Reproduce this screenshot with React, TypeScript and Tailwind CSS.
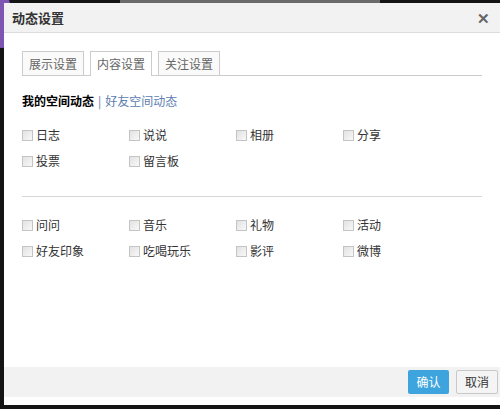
import React from 'react'

const rowsTop = [
    ['日志', '说说', '相册', '分享'],
    ['投票', '留言板'],
]

const rowsBottom = [
    ['问问', '音乐', '礼物', '活动'],
    ['好友印象', '吃喝玩乐', '影评', '微博'],
]

const Check = ({ label }: { label: string }) => (
    <label className="flex items-center gap-[3px] w-[107px] h-[26px] cursor-pointer">
        <span className="w-[11px] h-[11px] border border-[#c4c4c4] bg-gradient-to-br from-[#e2e2e2] to-[#f8f8f8] shrink-0" />
        <span className="text-[12px] text-[#333]">{label}</span>
    </label>
)

const Rows = ({ rows }: { rows: string[][] }) => (
    <div className="flex flex-col">
        {rows.map((row, i) => (
            <div key={i} className="flex">
                {row.map((item) => (
                    <Check key={item} label={item} />
                ))}
            </div>
        ))}
    </div>
)

export default function App() {
    const tabs = ['展示设置', '内容设置', '关注设置']

    return (
        <div
            className="relative w-[500px] h-[409px] bg-[#141414] overflow-hidden pt-[3px] pl-[4px]"
            style={{ fontFamily: '"Noto Sans CJK SC", "Noto Sans", sans-serif' }}
        >
            {/* background bits peeking out */}
            <div className="absolute left-[-6px] top-[-4px] w-[16px] h-[52px] rounded-full bg-[#8a5cc4] opacity-90" />
            <div className="absolute left-[120px] top-0 w-[260px] h-[3px] bg-[#6b6b6b]" />

            <div className="relative flex flex-col w-[496px] h-[402px] bg-white">
                {/* title */}
                <div className="flex items-center justify-between h-[30px] px-[8px] bg-[#f2f2f2] border-b border-[#dcdcdc]">
                    <span className="text-[13px] font-bold text-[#333]">动态设置</span>
                    <span className="text-[15px] font-bold text-[#666] leading-none mr-[2px]">✕</span>
                </div>

                {/* body */}
                <div className="flex-1 px-[18px] pt-[18px]">
                    <div className="flex gap-[6px] border-b border-[#ccc] w-[460px]">
                        {tabs.map((t, i) => (
                            <div
                                key={t}
                                className={`w-[62px] h-[24px] flex items-center justify-center text-[12px] text-[#666] border border-[#ccc] border-b-0 -mb-px ${i === 1 ? 'bg-white h-[25px]' : 'bg-[#fafafa]'}`}
                            >
                                {t}
                            </div>
                        ))}
                    </div>

                    <div className="flex items-center mt-[16px] text-[12px]">
                        <span className="font-bold text-black">我的空间动态</span>
                        <span className="mx-[4px] text-[#5b7db0]">|</span>
                        <span className="text-[#5b7db0]">好友空间动态</span>
                    </div>

                    <div className="mt-[12px]">
                        <Rows rows={rowsTop} />
                    </div>

                    <div className="mt-[22px] mb-[15px] w-[460px] border-t border-[#d6d6d6]" />

                    <Rows rows={rowsBottom} />
                </div>

                {/* footer */}
                <div className="flex items-center justify-end gap-[7px] h-[30px] bg-[#f2f2f2] pr-[2px] mb-[8px]">
                    <button className="w-[41px] h-[24px] bg-[#3ea4de] text-white text-[12px] rounded-[2px]">确认</button>
                    <button className="w-[42px] h-[24px] bg-[#f4f4f4] border border-[#c8c8c8] text-[#333] text-[12px] rounded-[2px]">取消</button>
                </div>
            </div>
        </div>
    )
}
